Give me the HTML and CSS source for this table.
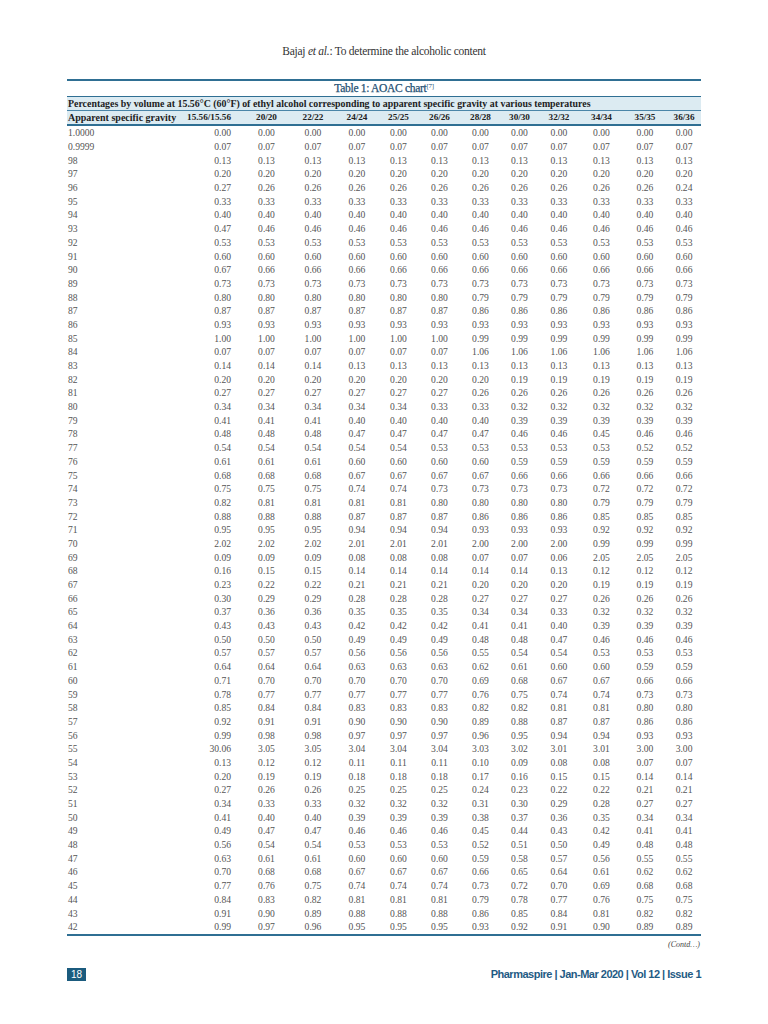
FILE: index.html
```html
<!DOCTYPE html>
<html>
<head>
<meta charset="utf-8">
<link rel="stylesheet" href="styles.css">
</head>
<body>
<div class="page">
  <div class="runhead">Bajaj <i>et al.</i>: To determine the alcoholic content</div>
  <table class="chart">
    <colgroup>
      <col class="c-label"><col class="c1"><col class="c2"><col class="c3"><col class="c4"><col class="c5"><col class="c6"><col class="c7"><col class="c8"><col class="c9"><col class="c10"><col class="c11"><col class="c12">
    </colgroup>
    <thead>
      <tr class="title"><th colspan="13">Table 1: AOAC chart<sup>[7]</sup></th></tr>
      <tr class="sub"><th colspan="13">Percentages by volume at 15.56°C (60°F) of ethyl alcohol corresponding to apparent specific gravity at various temperatures</th></tr>
      <tr class="head"><th>Apparent specific gravity</th><th class="first">15.56/15.56</th><th>20/20</th><th>22/22</th><th>24/24</th><th>25/25</th><th>26/26</th><th>28/28</th><th>30/30</th><th>32/32</th><th>34/34</th><th>35/35</th><th>36/36</th></tr>
    </thead>
    <tbody>
      <tr class="r0"><td>1.0000</td><td class="first">0.00</td><td>0.00</td><td>0.00</td><td>0.00</td><td>0.00</td><td>0.00</td><td>0.00</td><td>0.00</td><td>0.00</td><td>0.00</td><td>0.00</td><td>0.00</td></tr>
      <tr><td>0.9999</td><td class="first">0.07</td><td>0.07</td><td>0.07</td><td>0.07</td><td>0.07</td><td>0.07</td><td>0.07</td><td>0.07</td><td>0.07</td><td>0.07</td><td>0.07</td><td>0.07</td></tr>
      <tr><td>98</td><td class="first">0.13</td><td>0.13</td><td>0.13</td><td>0.13</td><td>0.13</td><td>0.13</td><td>0.13</td><td>0.13</td><td>0.13</td><td>0.13</td><td>0.13</td><td>0.13</td></tr>
      <tr><td>97</td><td class="first">0.20</td><td>0.20</td><td>0.20</td><td>0.20</td><td>0.20</td><td>0.20</td><td>0.20</td><td>0.20</td><td>0.20</td><td>0.20</td><td>0.20</td><td>0.20</td></tr>
      <tr><td>96</td><td class="first">0.27</td><td>0.26</td><td>0.26</td><td>0.26</td><td>0.26</td><td>0.26</td><td>0.26</td><td>0.26</td><td>0.26</td><td>0.26</td><td>0.26</td><td>0.24</td></tr>
      <tr><td>95</td><td class="first">0.33</td><td>0.33</td><td>0.33</td><td>0.33</td><td>0.33</td><td>0.33</td><td>0.33</td><td>0.33</td><td>0.33</td><td>0.33</td><td>0.33</td><td>0.33</td></tr>
      <tr><td>94</td><td class="first">0.40</td><td>0.40</td><td>0.40</td><td>0.40</td><td>0.40</td><td>0.40</td><td>0.40</td><td>0.40</td><td>0.40</td><td>0.40</td><td>0.40</td><td>0.40</td></tr>
      <tr><td>93</td><td class="first">0.47</td><td>0.46</td><td>0.46</td><td>0.46</td><td>0.46</td><td>0.46</td><td>0.46</td><td>0.46</td><td>0.46</td><td>0.46</td><td>0.46</td><td>0.46</td></tr>
      <tr><td>92</td><td class="first">0.53</td><td>0.53</td><td>0.53</td><td>0.53</td><td>0.53</td><td>0.53</td><td>0.53</td><td>0.53</td><td>0.53</td><td>0.53</td><td>0.53</td><td>0.53</td></tr>
      <tr><td>91</td><td class="first">0.60</td><td>0.60</td><td>0.60</td><td>0.60</td><td>0.60</td><td>0.60</td><td>0.60</td><td>0.60</td><td>0.60</td><td>0.60</td><td>0.60</td><td>0.60</td></tr>
      <tr><td>90</td><td class="first">0.67</td><td>0.66</td><td>0.66</td><td>0.66</td><td>0.66</td><td>0.66</td><td>0.66</td><td>0.66</td><td>0.66</td><td>0.66</td><td>0.66</td><td>0.66</td></tr>
      <tr><td>89</td><td class="first">0.73</td><td>0.73</td><td>0.73</td><td>0.73</td><td>0.73</td><td>0.73</td><td>0.73</td><td>0.73</td><td>0.73</td><td>0.73</td><td>0.73</td><td>0.73</td></tr>
      <tr><td>88</td><td class="first">0.80</td><td>0.80</td><td>0.80</td><td>0.80</td><td>0.80</td><td>0.80</td><td>0.79</td><td>0.79</td><td>0.79</td><td>0.79</td><td>0.79</td><td>0.79</td></tr>
      <tr><td>87</td><td class="first">0.87</td><td>0.87</td><td>0.87</td><td>0.87</td><td>0.87</td><td>0.87</td><td>0.86</td><td>0.86</td><td>0.86</td><td>0.86</td><td>0.86</td><td>0.86</td></tr>
      <tr><td>86</td><td class="first">0.93</td><td>0.93</td><td>0.93</td><td>0.93</td><td>0.93</td><td>0.93</td><td>0.93</td><td>0.93</td><td>0.93</td><td>0.93</td><td>0.93</td><td>0.93</td></tr>
      <tr><td>85</td><td class="first">1.00</td><td>1.00</td><td>1.00</td><td>1.00</td><td>1.00</td><td>1.00</td><td>0.99</td><td>0.99</td><td>0.99</td><td>0.99</td><td>0.99</td><td>0.99</td></tr>
      <tr><td>84</td><td class="first">0.07</td><td>0.07</td><td>0.07</td><td>0.07</td><td>0.07</td><td>0.07</td><td>1.06</td><td>1.06</td><td>1.06</td><td>1.06</td><td>1.06</td><td>1.06</td></tr>
      <tr><td>83</td><td class="first">0.14</td><td>0.14</td><td>0.14</td><td>0.13</td><td>0.13</td><td>0.13</td><td>0.13</td><td>0.13</td><td>0.13</td><td>0.13</td><td>0.13</td><td>0.13</td></tr>
      <tr><td>82</td><td class="first">0.20</td><td>0.20</td><td>0.20</td><td>0.20</td><td>0.20</td><td>0.20</td><td>0.20</td><td>0.19</td><td>0.19</td><td>0.19</td><td>0.19</td><td>0.19</td></tr>
      <tr><td>81</td><td class="first">0.27</td><td>0.27</td><td>0.27</td><td>0.27</td><td>0.27</td><td>0.27</td><td>0.26</td><td>0.26</td><td>0.26</td><td>0.26</td><td>0.26</td><td>0.26</td></tr>
      <tr><td>80</td><td class="first">0.34</td><td>0.34</td><td>0.34</td><td>0.34</td><td>0.34</td><td>0.33</td><td>0.33</td><td>0.32</td><td>0.32</td><td>0.32</td><td>0.32</td><td>0.32</td></tr>
      <tr><td>79</td><td class="first">0.41</td><td>0.41</td><td>0.41</td><td>0.40</td><td>0.40</td><td>0.40</td><td>0.40</td><td>0.39</td><td>0.39</td><td>0.39</td><td>0.39</td><td>0.39</td></tr>
      <tr><td>78</td><td class="first">0.48</td><td>0.48</td><td>0.48</td><td>0.47</td><td>0.47</td><td>0.47</td><td>0.47</td><td>0.46</td><td>0.46</td><td>0.45</td><td>0.46</td><td>0.46</td></tr>
      <tr><td>77</td><td class="first">0.54</td><td>0.54</td><td>0.54</td><td>0.54</td><td>0.54</td><td>0.53</td><td>0.53</td><td>0.53</td><td>0.53</td><td>0.53</td><td>0.52</td><td>0.52</td></tr>
      <tr><td>76</td><td class="first">0.61</td><td>0.61</td><td>0.61</td><td>0.60</td><td>0.60</td><td>0.60</td><td>0.60</td><td>0.59</td><td>0.59</td><td>0.59</td><td>0.59</td><td>0.59</td></tr>
      <tr><td>75</td><td class="first">0.68</td><td>0.68</td><td>0.68</td><td>0.67</td><td>0.67</td><td>0.67</td><td>0.67</td><td>0.66</td><td>0.66</td><td>0.66</td><td>0.66</td><td>0.66</td></tr>
      <tr><td>74</td><td class="first">0.75</td><td>0.75</td><td>0.75</td><td>0.74</td><td>0.74</td><td>0.73</td><td>0.73</td><td>0.73</td><td>0.73</td><td>0.72</td><td>0.72</td><td>0.72</td></tr>
      <tr><td>73</td><td class="first">0.82</td><td>0.81</td><td>0.81</td><td>0.81</td><td>0.81</td><td>0.80</td><td>0.80</td><td>0.80</td><td>0.80</td><td>0.79</td><td>0.79</td><td>0.79</td></tr>
      <tr><td>72</td><td class="first">0.88</td><td>0.88</td><td>0.88</td><td>0.87</td><td>0.87</td><td>0.87</td><td>0.86</td><td>0.86</td><td>0.86</td><td>0.85</td><td>0.85</td><td>0.85</td></tr>
      <tr><td>71</td><td class="first">0.95</td><td>0.95</td><td>0.95</td><td>0.94</td><td>0.94</td><td>0.94</td><td>0.93</td><td>0.93</td><td>0.93</td><td>0.92</td><td>0.92</td><td>0.92</td></tr>
      <tr><td>70</td><td class="first">2.02</td><td>2.02</td><td>2.02</td><td>2.01</td><td>2.01</td><td>2.01</td><td>2.00</td><td>2.00</td><td>2.00</td><td>0.99</td><td>0.99</td><td>0.99</td></tr>
      <tr><td>69</td><td class="first">0.09</td><td>0.09</td><td>0.09</td><td>0.08</td><td>0.08</td><td>0.08</td><td>0.07</td><td>0.07</td><td>0.06</td><td>2.05</td><td>2.05</td><td>2.05</td></tr>
      <tr><td>68</td><td class="first">0.16</td><td>0.15</td><td>0.15</td><td>0.14</td><td>0.14</td><td>0.14</td><td>0.14</td><td>0.14</td><td>0.13</td><td>0.12</td><td>0.12</td><td>0.12</td></tr>
      <tr><td>67</td><td class="first">0.23</td><td>0.22</td><td>0.22</td><td>0.21</td><td>0.21</td><td>0.21</td><td>0.20</td><td>0.20</td><td>0.20</td><td>0.19</td><td>0.19</td><td>0.19</td></tr>
      <tr><td>66</td><td class="first">0.30</td><td>0.29</td><td>0.29</td><td>0.28</td><td>0.28</td><td>0.28</td><td>0.27</td><td>0.27</td><td>0.27</td><td>0.26</td><td>0.26</td><td>0.26</td></tr>
      <tr><td>65</td><td class="first">0.37</td><td>0.36</td><td>0.36</td><td>0.35</td><td>0.35</td><td>0.35</td><td>0.34</td><td>0.34</td><td>0.33</td><td>0.32</td><td>0.32</td><td>0.32</td></tr>
      <tr><td>64</td><td class="first">0.43</td><td>0.43</td><td>0.43</td><td>0.42</td><td>0.42</td><td>0.42</td><td>0.41</td><td>0.41</td><td>0.40</td><td>0.39</td><td>0.39</td><td>0.39</td></tr>
      <tr><td>63</td><td class="first">0.50</td><td>0.50</td><td>0.50</td><td>0.49</td><td>0.49</td><td>0.49</td><td>0.48</td><td>0.48</td><td>0.47</td><td>0.46</td><td>0.46</td><td>0.46</td></tr>
      <tr><td>62</td><td class="first">0.57</td><td>0.57</td><td>0.57</td><td>0.56</td><td>0.56</td><td>0.56</td><td>0.55</td><td>0.54</td><td>0.54</td><td>0.53</td><td>0.53</td><td>0.53</td></tr>
      <tr><td>61</td><td class="first">0.64</td><td>0.64</td><td>0.64</td><td>0.63</td><td>0.63</td><td>0.63</td><td>0.62</td><td>0.61</td><td>0.60</td><td>0.60</td><td>0.59</td><td>0.59</td></tr>
      <tr><td>60</td><td class="first">0.71</td><td>0.70</td><td>0.70</td><td>0.70</td><td>0.70</td><td>0.70</td><td>0.69</td><td>0.68</td><td>0.67</td><td>0.67</td><td>0.66</td><td>0.66</td></tr>
      <tr><td>59</td><td class="first">0.78</td><td>0.77</td><td>0.77</td><td>0.77</td><td>0.77</td><td>0.77</td><td>0.76</td><td>0.75</td><td>0.74</td><td>0.74</td><td>0.73</td><td>0.73</td></tr>
      <tr><td>58</td><td class="first">0.85</td><td>0.84</td><td>0.84</td><td>0.83</td><td>0.83</td><td>0.83</td><td>0.82</td><td>0.82</td><td>0.81</td><td>0.81</td><td>0.80</td><td>0.80</td></tr>
      <tr><td>57</td><td class="first">0.92</td><td>0.91</td><td>0.91</td><td>0.90</td><td>0.90</td><td>0.90</td><td>0.89</td><td>0.88</td><td>0.87</td><td>0.87</td><td>0.86</td><td>0.86</td></tr>
      <tr><td>56</td><td class="first">0.99</td><td>0.98</td><td>0.98</td><td>0.97</td><td>0.97</td><td>0.97</td><td>0.96</td><td>0.95</td><td>0.94</td><td>0.94</td><td>0.93</td><td>0.93</td></tr>
      <tr><td>55</td><td class="first">30.06</td><td>3.05</td><td>3.05</td><td>3.04</td><td>3.04</td><td>3.04</td><td>3.03</td><td>3.02</td><td>3.01</td><td>3.01</td><td>3.00</td><td>3.00</td></tr>
      <tr><td>54</td><td class="first">0.13</td><td>0.12</td><td>0.12</td><td>0.11</td><td>0.11</td><td>0.11</td><td>0.10</td><td>0.09</td><td>0.08</td><td>0.08</td><td>0.07</td><td>0.07</td></tr>
      <tr><td>53</td><td class="first">0.20</td><td>0.19</td><td>0.19</td><td>0.18</td><td>0.18</td><td>0.18</td><td>0.17</td><td>0.16</td><td>0.15</td><td>0.15</td><td>0.14</td><td>0.14</td></tr>
      <tr><td>52</td><td class="first">0.27</td><td>0.26</td><td>0.26</td><td>0.25</td><td>0.25</td><td>0.25</td><td>0.24</td><td>0.23</td><td>0.22</td><td>0.22</td><td>0.21</td><td>0.21</td></tr>
      <tr><td>51</td><td class="first">0.34</td><td>0.33</td><td>0.33</td><td>0.32</td><td>0.32</td><td>0.32</td><td>0.31</td><td>0.30</td><td>0.29</td><td>0.28</td><td>0.27</td><td>0.27</td></tr>
      <tr><td>50</td><td class="first">0.41</td><td>0.40</td><td>0.40</td><td>0.39</td><td>0.39</td><td>0.39</td><td>0.38</td><td>0.37</td><td>0.36</td><td>0.35</td><td>0.34</td><td>0.34</td></tr>
      <tr><td>49</td><td class="first">0.49</td><td>0.47</td><td>0.47</td><td>0.46</td><td>0.46</td><td>0.46</td><td>0.45</td><td>0.44</td><td>0.43</td><td>0.42</td><td>0.41</td><td>0.41</td></tr>
      <tr><td>48</td><td class="first">0.56</td><td>0.54</td><td>0.54</td><td>0.53</td><td>0.53</td><td>0.53</td><td>0.52</td><td>0.51</td><td>0.50</td><td>0.49</td><td>0.48</td><td>0.48</td></tr>
      <tr><td>47</td><td class="first">0.63</td><td>0.61</td><td>0.61</td><td>0.60</td><td>0.60</td><td>0.60</td><td>0.59</td><td>0.58</td><td>0.57</td><td>0.56</td><td>0.55</td><td>0.55</td></tr>
      <tr><td>46</td><td class="first">0.70</td><td>0.68</td><td>0.68</td><td>0.67</td><td>0.67</td><td>0.67</td><td>0.66</td><td>0.65</td><td>0.64</td><td>0.61</td><td>0.62</td><td>0.62</td></tr>
      <tr><td>45</td><td class="first">0.77</td><td>0.76</td><td>0.75</td><td>0.74</td><td>0.74</td><td>0.74</td><td>0.73</td><td>0.72</td><td>0.70</td><td>0.69</td><td>0.68</td><td>0.68</td></tr>
      <tr><td>44</td><td class="first">0.84</td><td>0.83</td><td>0.82</td><td>0.81</td><td>0.81</td><td>0.81</td><td>0.79</td><td>0.78</td><td>0.77</td><td>0.76</td><td>0.75</td><td>0.75</td></tr>
      <tr><td>43</td><td class="first">0.91</td><td>0.90</td><td>0.89</td><td>0.88</td><td>0.88</td><td>0.88</td><td>0.86</td><td>0.85</td><td>0.84</td><td>0.81</td><td>0.82</td><td>0.82</td></tr>
      <tr><td>42</td><td class="first">0.99</td><td>0.97</td><td>0.96</td><td>0.95</td><td>0.95</td><td>0.95</td><td>0.93</td><td>0.92</td><td>0.91</td><td>0.90</td><td>0.89</td><td>0.89</td></tr>
    </tbody>
  </table>
  <div class="contd"><i>(Contd…)</i></div>
  <div class="footer">
    <span class="pageno">18</span>
    <span class="journal">Pharmaspire | Jan-Mar 2020 | Vol 12 | Issue 1</span>
  </div>
</div>
</body>
</html>
```

FILE: styles.css
```css
html, body {
  margin: 0;
  padding: 0;
  background: #ffffff;
}

.page {
  width: 634px;
  margin: 0 auto;
  padding-top: 44px;
  font-family: "Liberation Serif", serif;
  color: #444;
}

.runhead {
  text-align: center;
  font-size: 11.5px;
  line-height: 14px;
  color: #333;
  letter-spacing: -0.25px;
  margin-bottom: 21px;
}

.chart {
  width: 634px;
  border-collapse: collapse;
  table-layout: fixed;
  border-top: 2px solid #2f6f93;
  border-bottom: 2px solid #2f6f93;
}

.c-label { width: 113px; }
.c1 { width: 63px; }
.c2 { width: 47px; }
.c3 { width: 46px; }
.c4 { width: 42px; }
.c5 { width: 41px; }
.c6 { width: 41px; }
.c7 { width: 41px; }
.c8 { width: 37px; }
.c9 { width: 42px; }
.c10 { width: 43px; }
.c11 { width: 44px; }
.c12 { width: 34px; }

.chart th,
.chart td {
  padding: 0;
  white-space: nowrap;
  overflow: visible;
}

.title th {
  background: #ffffff;
  color: #1d4f72;
  font-weight: normal;
  font-size: 11.5px;
  letter-spacing: -0.3px;
  height: 15px;
  line-height: 15px;
  text-align: center;
  border-bottom: 1.5px solid #2f6f93;
  -webkit-text-stroke: 0.25px #1d4f72;
}

.title sup {
  font-size: 7px;
  line-height: 0;
  vertical-align: 4px;
  -webkit-text-stroke: 0;
}

.sub th {
  background: #dcebf2;
  color: #222;
  font-size: 9.9px;
  font-weight: bold;
  text-align: left;
  height: 13px;
  line-height: 13px;
  padding-left: 1px;
  border-bottom: 1px solid #4a85a8;
}

.head th {
  background: #dcebf2;
  color: #222;
  font-size: 9.2px;
  font-weight: bold;
  height: 13px;
  line-height: 13px;
  text-align: center;
  border-bottom: 2px solid #2f6f93;
}

.head th:first-child {
  text-align: left;
  padding-left: 1px;
  font-size: 10px;
}

.head th.first,
.chart td.first {
  text-align: right;
  padding-right: 12px;
}

.chart td {
  font-size: 9.6px;
  color: #555;
  height: 13.68px;
  line-height: 13.68px;
  text-align: center;
}

.chart td:first-child {
  text-align: left;
  padding-left: 1px;
}

.chart tr.r0 td {
  height: 14px;
  line-height: 12px;
}

.contd {
  text-align: right;
  font-size: 8px;
  color: #444;
  line-height: 10px;
  margin-top: 4px;
  padding-right: 1px;
}

.footer {
  display: flex;
  justify-content: space-between;
  align-items: center;
  margin-top: 18px;
}

.pageno {
  background: #1b5b7e;
  color: #fff;
  font-family: "Liberation Sans", sans-serif;
  font-size: 10px;
  line-height: 13px;
  padding: 0 4px;
  display: inline-block;
}

.journal {
  font-family: "Liberation Sans", sans-serif;
  font-weight: bold;
  font-size: 11px;
  color: #1f5b84;
  letter-spacing: -0.5px;
}
```
